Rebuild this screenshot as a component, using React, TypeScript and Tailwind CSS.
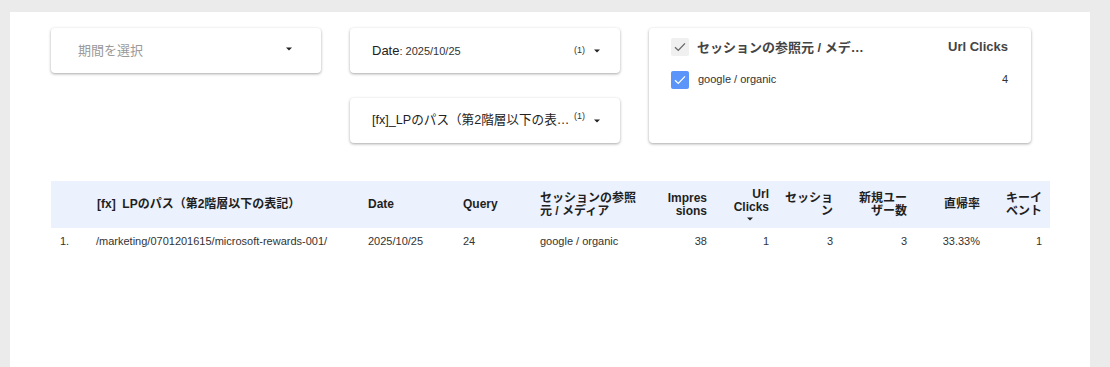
import React from "react";

const font = { fontFamily: '"Liberation Sans", Arial, "Noto Sans CJK JP", sans-serif' };

function Caret({ className = "" }: { className?: string }) {
  return (
    <svg width="6" height="4" viewBox="0 0 6 4" className={`shrink-0 ${className}`}>
      <path d="M0 0.5 L6 0.5 L3 3.5 Z" fill="#222" />
    </svg>
  );
}

function Check({ color }: { color: string }) {
  return (
    <svg width="12" height="10" viewBox="0 0 12 10">
      <path d="M1 5.2 L4.3 8.4 L11 1.4" fill="none" stroke={color} strokeWidth="1.3" />
    </svg>
  );
}

const cardCls = "bg-white rounded-[4px] shadow-[0_1px_3px_rgba(0,0,0,0.35)]";

type Col = { label: React.ReactNode; w: string; align: "left" | "right" };

const cols: Col[] = [
  { label: "", w: "w-[37px]", align: "left" },
  { label: "[fx]  LPのパス（第2階層以下の表記）", w: "w-[272px]", align: "left" },
  { label: "Date", w: "w-[95px]", align: "left" },
  { label: "Query", w: "w-[77px]", align: "left" },
  { label: <>セッションの参照<br />元 / メディア</>, w: "w-[123px]", align: "left" },
  { label: <>Impres<br />sions</>, w: "w-[60px]", align: "right" },
  {
    label: (
      <span className="inline-flex flex-col items-end">
        <span>Url</span>
        <span>Clicks</span>
        <span className="flex justify-center w-full pr-[2px] mt-[3px]"><Caret /></span>
      </span>
    ),
    w: "w-[62px]",
    align: "right",
  },
  { label: <>セッショ<br />ン</>, w: "w-[64px]", align: "right" },
  { label: <>新規ユー<br />ザー数</>, w: "w-[74px]", align: "right" },
  { label: "直帰率", w: "w-[73px]", align: "right" },
  { label: <>キーイ<br />ベント</>, w: "w-[62px]", align: "right" },
];

const row = [
  "1.",
  "/marketing/0701201615/microsoft-rewards-001/",
  "2025/10/25",
  "24",
  "google / organic",
  "38",
  "1",
  "3",
  "3",
  "33.33%",
  "1",
];

export default function App() {
  return (
    <div className="w-[1110px] h-[367px] bg-[#ebebeb] overflow-hidden" style={font}>
      <div className="ml-[10px] mt-[12px] w-[1080px] h-[355px] bg-white pl-[41px] pt-[16px]">
        <div className="flex gap-[29px]">
          <div className="w-[270px]">
            <div className={`${cardCls} h-[45px] flex items-center pl-[27px] pr-[29px]`}>
              <span className="flex-1 text-[13px] text-[#9a9a9a] mt-[1px]">期間を選択</span>
              <Caret className="mb-[3px]" />
            </div>
          </div>
          <div className="w-[270px] flex flex-col gap-[25px]">
            <div className={`${cardCls} h-[45px] flex items-center pl-[22px] pr-[20px]`}>
              <span className="flex-1 text-[#222] flex items-baseline">
                <span className="text-[13px]">Date</span>
                <span className="text-[11px] text-[#333]">: 2025/10/25</span>
              </span>
              <span className="text-[9px] text-[#333] mr-[9px]">(1)</span>
              <Caret />
            </div>
            <div className={`${cardCls} h-[45px] flex items-center pl-[22px] pr-[20px]`}>
              <span className="shrink-0 text-[12.6px] text-[#222] whitespace-nowrap">[fx]_LPのパス（第2階層以下の表…</span>
              <span className="shrink-0 ml-auto text-[9px] text-[#333] mr-[9px] mb-[8px]">(1)</span>
              <Caret />
            </div>
          </div>
          <div className={`${cardCls} w-[382px] h-[115px] pl-[22px] pr-[23px] pt-[9px]`}>
            <div className="flex items-center h-[19px]">
              <div className="w-[18px] h-[18px] bg-[#f0f0f0] rounded-[2px] flex items-center justify-center">
                <Check color="#666" />
              </div>
              <span className="ml-[8px] flex-1 text-[13px] font-bold text-[#444] mt-[2px]">セッションの参照元 / メデ…</span>
              <span className="text-[13px] font-bold text-[#444]">Url Clicks</span>
            </div>
            <div className="flex items-center h-[19px] mt-[14px]">
              <div className="w-[18px] h-[18px] bg-[#5b95f9] rounded-[2px] flex items-center justify-center">
                <Check color="#ffffff" />
              </div>
              <span className="ml-[9px] flex-1 text-[11px] text-[#333]">google / organic</span>
              <span className="text-[11px] text-[#333]">4</span>
            </div>
          </div>
        </div>

        <table className="mt-[38px] w-[999px] table-fixed border-collapse">
          <thead>
            <tr className="bg-[#ebf1fd] h-[47px]">
              {cols.map((c, i) => (
                <th
                  key={i}
                  className={`${c.w} px-[8px] text-[12px] leading-[13px] font-bold text-[#1f1f1f] align-middle ${
                    c.align === "right" ? "text-right" : "text-left"
                  } ${i === 1 ? "pl-[9px] whitespace-pre" : ""}`}
                >
                  {c.label}
                </th>
              ))}
            </tr>
          </thead>
          <tbody>
            <tr className="h-[26px]">
              {row.map((v, i) => (
                <td
                  key={i}
                  className={`px-[8px] text-[11px] text-[#333] whitespace-nowrap ${
                    cols[i].align === "right" ? "text-right" : "text-left"
                  } ${i === 0 ? "pl-[9px]" : ""}`}
                >
                  {v}
                </td>
              ))}
            </tr>
          </tbody>
        </table>
      </div>
    </div>
  );
}
